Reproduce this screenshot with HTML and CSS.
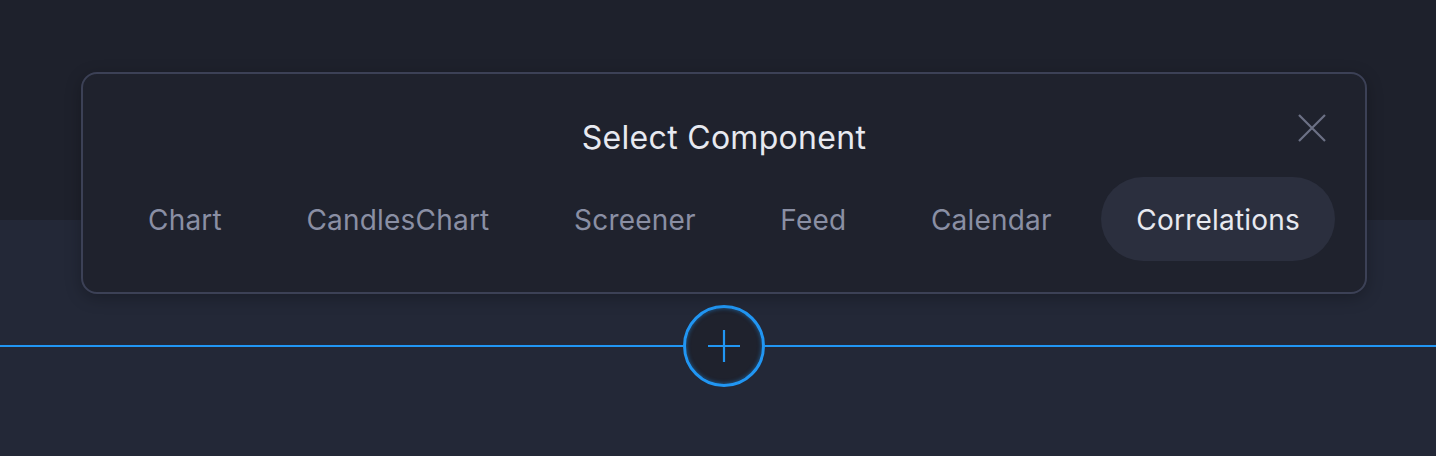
FILE: index.html
```html
<!DOCTYPE html>
<html>
<head>
<meta charset="utf-8">
<link rel="stylesheet" href="styles.css">
</head>
<body>
<div class="page">
  <div class="top"></div>
  <div class="bottom">
    <div class="divider">
      <span class="line line-left"></span>
      <button class="add-btn" aria-label="Add">
        <svg width="36" height="36" viewBox="0 0 36 36"><path d="M18 2V34M2 18H34" stroke="#2196f3" stroke-width="2.2" fill="none"/></svg>
      </button>
      <span class="line"></span>
    </div>
  </div>
  <div class="modal">
    <div class="modal-head">
      <h2 class="title">Select Component</h2>
      <button class="close" aria-label="Close">
        <svg width="30" height="30" viewBox="0 0 30 30"><path d="M2 2L28 28M28 2L2 28" stroke="#6c7185" stroke-width="2.2" fill="none"/></svg>
      </button>
    </div>
    <div class="tabs">
      <span class="tab">Chart</span>
      <span class="tab">CandlesChart</span>
      <span class="tab">Screener</span>
      <span class="tab">Feed</span>
      <span class="tab">Calendar</span>
      <span class="tab active">Correlations</span>
    </div>
  </div>
</div>
</body>
</html>
```

FILE: styles.css
```css
* { box-sizing: border-box; }
html, body { margin: 0; padding: 0; }
body {
  width: 1436px;
  height: 456px;
  overflow: hidden;
  background: #232837;
  font-family: Inter, "Noto Sans", sans-serif;
}
.page {
  position: relative;
  width: 1436px;
  height: 456px;
  display: flex;
  flex-direction: column;
}
.top {
  height: 220px;
  background: #1e212c;
}
.bottom {
  flex: 1;
  background: #232837;
  padding-top: 85px;
}
.divider {
  display: flex;
  align-items: center;
  height: 82px;
}
.line {
  flex: 1;
  height: 2px;
  background: #2196f3;
}
.line-left {
  flex: 0 0 683px;
}
.add-btn {
  flex: 0 0 82px;
  width: 82px;
  height: 82px;
  border-radius: 50%;
  border: 3px solid #2196f3;
  background: #1f222d;
  box-shadow: inset 0 0 4px rgba(33,150,243,0.55);
  display: flex;
  align-items: center;
  justify-content: center;
  padding: 0;
  margin: 0;
}
.add-btn svg { display: block; }
.modal {
  position: absolute;
  left: 81px;
  top: 72px;
  width: 1286px;
  height: 222px;
  background: #1f222d;
  border: 2px solid #3c4156;
  border-radius: 16px;
  box-shadow: 0 4px 16px rgba(0,0,0,0.25);
  padding: 0 30px;
  display: flex;
  flex-direction: column;
}
.modal-head {
  position: relative;
  height: 103px;
  display: flex;
  align-items: center;
  justify-content: center;
}
.title {
  margin: 0;
  margin-top: 24px;
  font-size: 32px;
  font-weight: 400;
  color: #e7e9f0;
  letter-spacing: 0.3px;
}
.close {
  position: absolute;
  right: 8px;
  top: 39px;
  width: 30px;
  height: 30px;
  padding: 0;
  border: 0;
  background: transparent;
}
.close svg { display: block; }
.tabs {
  display: flex;
  justify-content: space-between;
  align-items: center;
}
.tab {
  height: 84px;
  padding: 2px 35px 0;
  border-radius: 42px;
  display: flex;
  align-items: center;
  font-size: 28px;
  font-weight: 400;
  color: #8a8fa4;
  letter-spacing: 0.2px;
}
.tab.active {
  background: #2b2f3e;
  color: #e7e9f0;
}
```
